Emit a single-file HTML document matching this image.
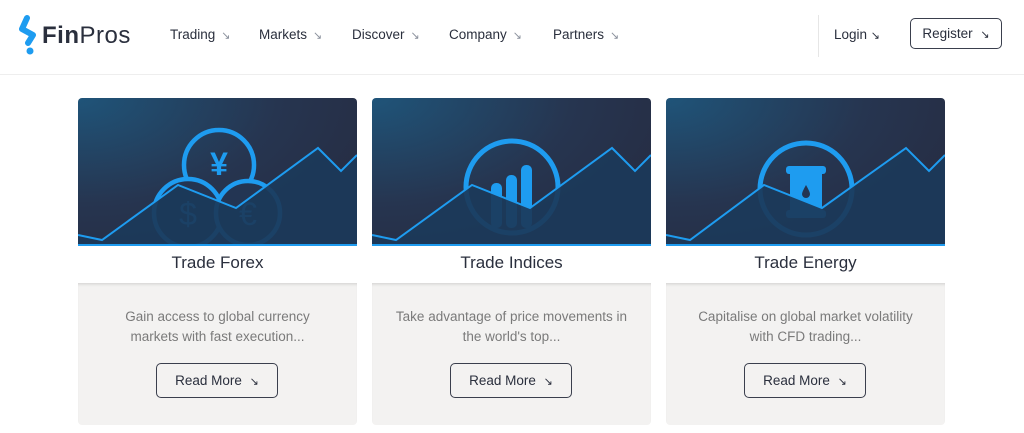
<!DOCTYPE html>
<html><head><meta charset="utf-8"><style>
*{margin:0;padding:0;box-sizing:border-box}
body{width:1024px;height:433px;background:#fff;font-family:"Liberation Sans",sans-serif;position:relative;overflow:hidden}
.hdr{position:absolute;left:0;top:0;width:1024px;height:75px;border-bottom:1px solid #eee;background:#fff}
.logo{position:absolute;left:42px;top:22px;font-size:24px;color:#2a2f3d;letter-spacing:0.5px}
.nav{position:absolute;top:27px;font-size:13.5px;color:#2a2f3d}
.arr{display:inline-block;color:#8a909c;font-size:11px;margin-left:6px}
.sep{position:absolute;left:818px;top:15px;width:1px;height:42px;background:#e6e6e6}
.reg{position:absolute;left:910px;top:18px;width:92px;height:31px;border:1px solid #3a3f4d;border-radius:5px;font-size:13.5px;color:#2a2f3d;text-align:center;line-height:29px}
.card{position:absolute;top:98px;width:279px;height:327px}
.img{position:absolute;left:0;top:0;width:279px;height:148px;border-radius:4px 4px 0 0;overflow:hidden}
.ttl{position:absolute;top:148px;left:0;width:279px;height:36px;text-align:center;font-size:17px;color:#2a2f3d;line-height:34px;background:#fff}
.body{position:absolute;top:185px;left:0;width:279px;height:142px;background:#f3f2f1;border-radius:0 0 4px 4px;box-shadow:inset 0 3px 3px -2px rgba(0,0,0,.15)}
.txt{margin-top:24px;text-align:center;font-size:13.5px;line-height:20px;color:#7a7a7a;padding:0 5px;white-space:nowrap}
.btn{position:absolute;left:78px;top:80px;width:122px;height:35px;border:1px solid #3a3f4d;border-radius:5px;text-align:center;line-height:33px;font-size:13.5px;color:#2a2f3d}
</style></head><body>
<div class="hdr">
<svg style="position:absolute;left:18px;top:15px" width="24" height="42" viewBox="0 0 24 42"><path d="M9 3 L4 14 L15 20 L10 28" stroke="#1e9cf0" stroke-width="6" stroke-linecap="round" stroke-linejoin="round" fill="none"/><circle cx="12" cy="36" r="3.5" fill="#1e9cf0"/></svg>
<div class="logo"><b>Fin</b>Pros</div>
<div class="nav" style="left:170px">Trading<span class="arr">↘</span></div>
<div class="nav" style="left:259px">Markets<span class="arr">↘</span></div>
<div class="nav" style="left:352px">Discover<span class="arr">↘</span></div>
<div class="nav" style="left:449px">Company<span class="arr">↘</span></div>
<div class="nav" style="left:553px">Partners<span class="arr">↘</span></div>
<div class="sep"></div>
<div class="nav" style="left:834px;color:#2a2f3d">Login <span style="font-size:11px">↘</span></div>
<div class="reg">Register <span style="font-size:11px;margin-left:4px">↘</span></div>
</div>

<svg width="0" height="0" style="position:absolute"><defs>
<radialGradient id="bg" cx="0" cy="0" r="1.3"><stop offset="0" stop-color="#1f5479"/><stop offset="0.55" stop-color="#263550"/><stop offset="1" stop-color="#272a3f"/></radialGradient>
</defs></svg>

<div class="card" style="left:78px">
<div class="img"><svg width="279" height="148">
<rect width="279" height="148" fill="url(#bg)"/>
<circle cx="141" cy="67" r="35" fill="none" stroke="#1e9cf0" stroke-width="4.5"/>
<text x="141" y="77" text-anchor="middle" font-family="Liberation Sans" font-weight="bold" font-size="32" fill="#1e9cf0">¥</text>
<circle cx="110" cy="115" r="34" fill="#233553" stroke="#1e9cf0" stroke-width="4.5"/>
<circle cx="170" cy="115" r="32" fill="#233553" stroke="#1e9cf0" stroke-width="4.5"/>
<text x="110" y="127" text-anchor="middle" font-size="32" fill="#1e9cf0">$</text>
<text x="170" y="127" text-anchor="middle" font-size="32" fill="#1e9cf0">€</text>
<polygon points="0,137 24,142 100,87 158,110 240,50 263,73 279,57 279,148 0,148" fill="#1b3a5a" fill-opacity="0.92"/>
<polyline points="0,137 24,142 100,87 158,110 240,50 263,73 279,57" fill="none" stroke="#1e9cf0" stroke-width="2"/>
<line x1="0" y1="147" x2="279" y2="147" stroke="#1e9cf0" stroke-width="2"/>
</svg></div>
<div class="ttl">Trade Forex</div>
<div class="body"><div class="txt">Gain access to global currency<br>markets with fast execution...</div><div class="btn">Read More <span style="font-size:11px;margin-left:4px">↘</span></div></div>
</div>

<div class="card" style="left:372px">
<div class="img"><svg width="279" height="148">
<rect width="279" height="148" fill="url(#bg)"/>
<circle cx="140" cy="89" r="46" fill="none" stroke="#1e9cf0" stroke-width="5"/>
<rect x="119" y="85" width="11" height="45" rx="5" fill="#1e9cf0"/>
<rect x="134" y="77" width="11" height="53" rx="5" fill="#1e9cf0"/>
<rect x="149" y="67" width="11" height="63" rx="5" fill="#1e9cf0"/>
<polygon points="0,137 24,142 100,87 158,110 240,50 263,73 279,57 279,148 0,148" fill="#1b3a5a" fill-opacity="0.92"/>
<polyline points="0,137 24,142 100,87 158,110 240,50 263,73 279,57" fill="none" stroke="#1e9cf0" stroke-width="2"/>
<line x1="0" y1="147" x2="279" y2="147" stroke="#1e9cf0" stroke-width="2"/>
</svg></div>
<div class="ttl">Trade Indices</div>
<div class="body"><div class="txt">Take advantage of price movements in<br>the world's top...</div><div class="btn">Read More <span style="font-size:11px;margin-left:4px">↘</span></div></div>
</div>

<div class="card" style="left:666px">
<div class="img"><svg width="279" height="148">
<rect width="279" height="148" fill="url(#bg)"/>
<circle cx="140" cy="91" r="46" fill="none" stroke="#1e9cf0" stroke-width="5"/>
<rect x="120" y="68" width="40" height="8" rx="3" fill="#1e9cf0"/>
<rect x="124" y="74" width="32" height="40" fill="#1e9cf0"/>
<rect x="120" y="112" width="40" height="8" rx="3" fill="#1e9cf0"/>
<path d="M140 87 Q144 94 144 96 A4 4 0 0 1 136 96 Q136 94 140 87Z" fill="#233553"/>
<polygon points="0,137 24,142 98,87 156,110 240,50 263,73 279,57 279,148 0,148" fill="#1b3a5a" fill-opacity="0.92"/>
<polyline points="0,137 24,142 98,87 156,110 240,50 263,73 279,57" fill="none" stroke="#1e9cf0" stroke-width="2"/>
<line x1="0" y1="147" x2="279" y2="147" stroke="#1e9cf0" stroke-width="2"/>
</svg></div>
<div class="ttl">Trade Energy</div>
<div class="body"><div class="txt">Capitalise on global market volatility<br>with CFD trading...</div><div class="btn">Read More <span style="font-size:11px;margin-left:4px">↘</span></div></div>
</div>
</body></html>
